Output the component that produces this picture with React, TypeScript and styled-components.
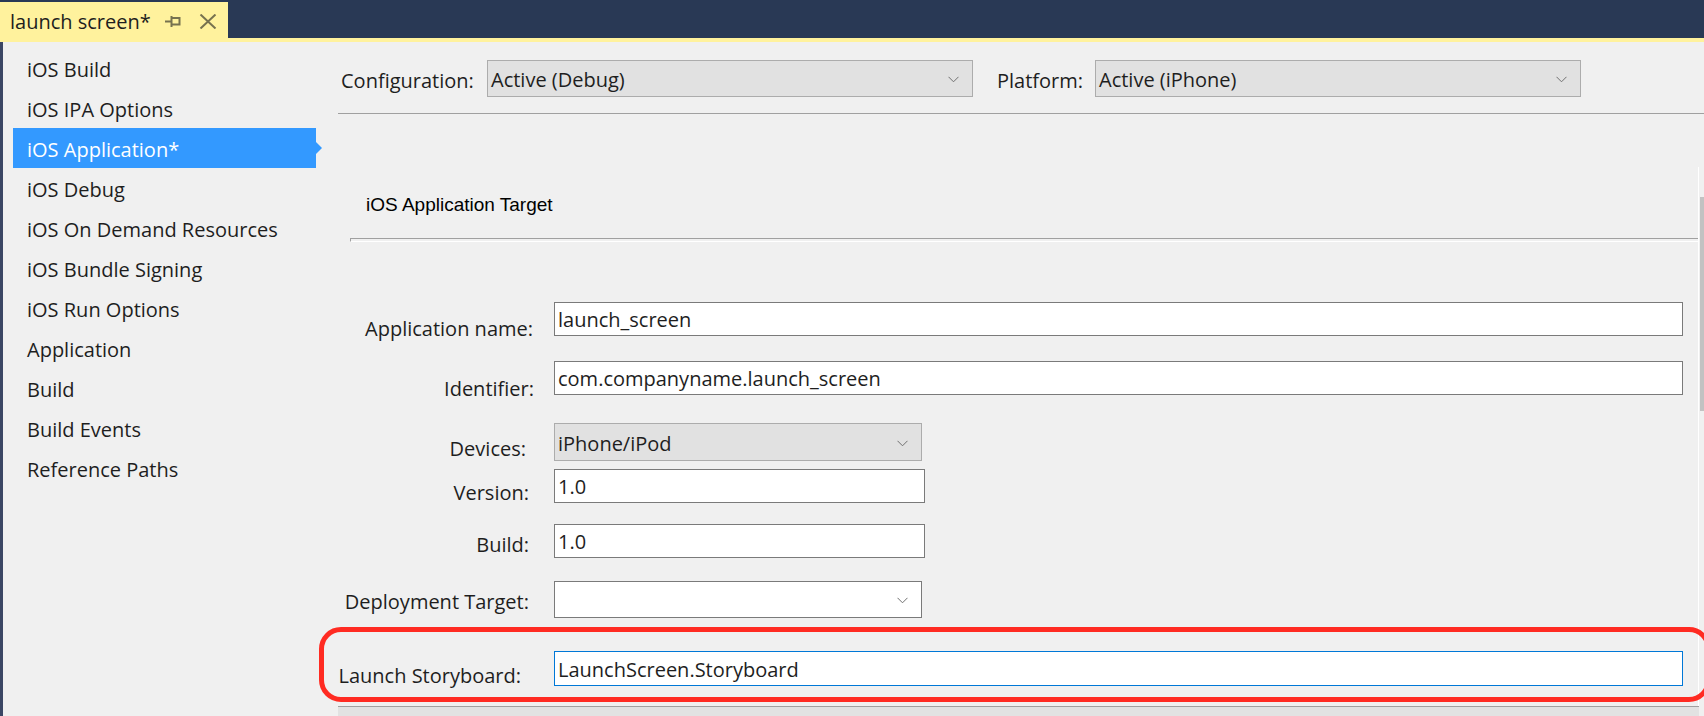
import styled, {createGlobalStyle} from "styled-components";

const GlobalStyle = createGlobalStyle`
    html, body {
        margin: 0;
        padding: 0;
        background: #f0f0f0;
    }
    body {
        font-family: "Open Sans", "Noto Sans", sans-serif;
        color: #1e1e1e;
    }
`

const navItems = [
    "iOS Build",
    "iOS IPA Options",
    "iOS Application*",
    "iOS Debug",
    "iOS On Demand Resources",
    "iOS Bundle Signing",
    "iOS Run Options",
    "Application",
    "Build",
    "Build Events",
    "Reference Paths",
]

const Chevron = () => (
    <svg width="11" height="7" viewBox="0 0 11 7">
        <path d="M0.5 0.8 L5.5 5.8 L10.5 0.8" fill="none" stroke="#6f6f6f" strokeWidth="1"/>
    </svg>
)

const PinIcon = () => (
    <svg width="16" height="13" viewBox="0 0 16 13">
        <path d="M0 6.5 H6.5 M6.5 1 V12 M6.5 3 H14.5 V9.5 H6.5" fill="none" stroke="#77724f" strokeWidth="2"/>
    </svg>
)

const CloseIcon = () => (
    <svg width="18" height="15" viewBox="0 0 18 15">
        <path d="M1.5 0.5 L16.5 14.5 M16.5 0.5 L1.5 14.5" fill="none" stroke="#77724f" strokeWidth="2"/>
    </svg>
)

type SelectProps = { value: string, width: number, height: number, blank?: boolean }

const Select = ({value, width, height, blank}: SelectProps) => (
    <StyledSelect $w={width} $h={height} $blank={blank}>
        <span>{value}</span>
        <Chevron/>
    </StyledSelect>
)

type RowProps = {
    label: string
    top: number
    drop: number
    nudge: number
    height: number
    highlight?: boolean
    children: React.ReactNode
}

const FieldRow = ({label, top, drop, nudge, height, highlight, children}: RowProps) => (
    <Row $top={top} $highlight={highlight}>
        <Label $drop={drop} $nudge={nudge} $h={height}>{label}</Label>
        {children}
    </Row>
)

export default function App() {
    return (
        <Frame>
            <GlobalStyle/>
            <TabWell>
                <Tab>
                    <TabTitle>launch screen*</TabTitle>
                    <TabButton $w={34}><PinIcon/></TabButton>
                    <TabButton $w={24}><CloseIcon/></TabButton>
                </Tab>
            </TabWell>
            <TabAccent/>
            <Body>
                <Sidebar>
                    {navItems.map(item => (
                        <NavItem key={item} $active={item === "iOS Application*"}>{item}</NavItem>
                    ))}
                </Sidebar>
                <Content>
                    <ConfigBar>
                        <ConfigLabel $w={146}>Configuration:</ConfigLabel>
                        <Select value="Active (Debug)" width={486} height={37}/>
                        <ConfigLabel $w={98} $gap={24}>Platform:</ConfigLabel>
                        <Select value="Active (iPhone)" width={486} height={37}/>
                    </ConfigBar>
                    <Panel>
                        <FormArea>
                            <SectionTitle>iOS Application Target</SectionTitle>
                            <GroupRule/>
                            <FieldRow label="Application name:" top={60} drop={8} nudge={3} height={34}>
                                <TextBox $w={1129}>launch_screen</TextBox>
                            </FieldRow>
                            <FieldRow label="Identifier:" top={25} drop={9} nudge={4} height={34}>
                                <TextBox $w={1129}>com.companyname.launch_screen</TextBox>
                            </FieldRow>
                            <FieldRow label="Devices:" top={28} drop={5} nudge={-4} height={38}>
                                <Select value="iPhone/iPod" width={368} height={38}/>
                            </FieldRow>
                            <FieldRow label="Version:" top={8} drop={5} nudge={-1} height={34}>
                                <TextBox $w={371}>1.0</TextBox>
                            </FieldRow>
                            <FieldRow label="Build:" top={21} drop={2} nudge={-1} height={34}>
                                <TextBox $w={371}>1.0</TextBox>
                            </FieldRow>
                            <FieldRow label="Deployment Target:" top={23} drop={0} nudge={-1} height={37}>
                                <Select value="" width={368} height={37} blank/>
                            </FieldRow>
                            <FieldRow label="Launch Storyboard:" top={33} drop={5} nudge={-9} height={35} highlight>
                                <TextBox $w={1129} $h={35} $focused>LaunchScreen.Storyboard</TextBox>
                            </FieldRow>
                        </FormArea>
                        <ScrollTrack>
                            <ScrollThumb/>
                        </ScrollTrack>
                    </Panel>
                    <NextGroup/>
                </Content>
            </Body>
        </Frame>
    )
}

const Frame = styled.div`
    width: 1704px;
    height: 716px;
    overflow: hidden;
    display: flex;
    flex-direction: column;
    background: #f0f0f0;
`

const TabWell = styled.div`
    height: 38px;
    flex-shrink: 0;
    background: #293955;
    display: flex;
    align-items: flex-end;
`

const Tab = styled.div`
    width: 228px;
    height: 36px;
    background: #fff29d;
    display: flex;
    align-items: center;
    box-sizing: border-box;
    padding-left: 10px;
`

const TabTitle = styled.span`
    font-size: 20px;
    color: #1e1e1e;
    width: 155px;
    white-space: nowrap;
    margin-top: 3px;
`

const TabButton = styled.span<{ $w: number }>`
    width: ${p => p.$w}px;
    display: flex;
    align-items: center;
    margin-top: 2px;
`

const TabAccent = styled.div`
    height: 4px;
    flex-shrink: 0;
    background: #fff29d;
`

const Body = styled.div`
    flex: 1;
    display: flex;
    border-left: 3px solid #3b4664;
    min-height: 0;
`

const Sidebar = styled.nav`
    width: 335px;
    flex-shrink: 0;
    padding-top: 6px;
    box-sizing: border-box;
`

const NavItem = styled.div<{ $active?: boolean }>`
    position: relative;
    margin-left: 10px;
    width: 303px;
    height: 40px;
    line-height: 43px;
    padding-left: 14px;
    box-sizing: border-box;
    font-size: 20px;
    white-space: nowrap;
    background: ${p => p.$active ? "#3399ff" : "transparent"};
    color: ${p => p.$active ? "#ffffff" : "#1e1e1e"};

    &::after {
        content: '';
        display: ${p => p.$active ? "block" : "none"};
        position: absolute;
        right: -6px;
        top: 14px;
        border-left: 6px solid #3399ff;
        border-top: 6px solid transparent;
        border-bottom: 6px solid transparent;
    }
`

const Content = styled.main`
    flex: 1;
    display: flex;
    flex-direction: column;
    min-width: 0;
`

const ConfigBar = styled.div`
    height: 53px;
    flex-shrink: 0;
    border-bottom: 1px solid #a0a0a0;
    display: flex;
    align-items: flex-start;
    padding: 18px 0 0 3px;
`

const ConfigLabel = styled.span<{ $w: number, $gap?: number }>`
    width: ${p => p.$w}px;
    margin-left: ${p => p.$gap ?? 0}px;
    font-size: 20px;
    line-height: 37px;
    padding-top: 2px;
    white-space: nowrap;
`

const StyledSelect = styled.div<{ $w: number, $h: number, $blank?: boolean }>`
    width: ${p => p.$w}px;
    height: ${p => p.$h}px;
    box-sizing: border-box;
    border: 1px solid ${p => p.$blank ? "#7a7a7a" : "#acacac"};
    background: ${p => p.$blank ? "#ffffff" : "#e1e1e1"};
    display: flex;
    align-items: center;
    justify-content: space-between;
    padding: 2px 13px 0 3px;
    font-size: 20px;
    white-space: nowrap;
`

const Panel = styled.div`
    flex: 1;
    display: flex;
    min-height: 0;
`

const FormArea = styled.div`
    flex: 1;
    display: flex;
    flex-direction: column;
`

const SectionTitle = styled.div`
    margin: 79px 0 0 28px;
    height: 24px;
    line-height: 24px;
    font-family: "Liberation Sans", Arial, sans-serif;
    font-size: 19px;
    color: #000000;
`

const GroupRule = styled.div`
    margin: 21px 0 0 12px;
    height: 2px;
    border-top: 1px solid #a0a0a0;
    border-bottom: 1px solid #ffffff;
    border-left: 1px solid #a0a0a0;
`

const Row = styled.div<{ $top: number, $highlight?: boolean }>`
    position: relative;
    margin-top: ${p => p.$top}px;
    display: grid;
    grid-template-columns: 192px auto;
    column-gap: 24px;
    align-items: start;
    justify-content: start;

    &::after {
        content: '';
        display: ${p => p.$highlight ? "block" : "none"};
        position: absolute;
        top: -24px;
        bottom: -16px;
        left: -19px;
        right: -13px;
        border: 5px solid #ff2b22;
        border-radius: 22px;
        pointer-events: none;
    }
`

const Label = styled.label<{ $drop: number, $nudge: number, $h: number }>`
    text-align: right;
    white-space: nowrap;
    font-size: 20px;
    height: ${p => p.$h}px;
    line-height: ${p => p.$h + 2 * p.$drop + 4}px;
    margin-right: ${p => -p.$nudge}px;
`

const TextBox = styled.div<{ $w: number, $h?: number, $focused?: boolean }>`
    width: ${p => p.$w}px;
    height: ${p => p.$h ?? 34}px;
    box-sizing: border-box;
    background: #ffffff;
    border: 1px solid ${p => p.$focused ? "#0078d7" : "#7a7a7a"};
    padding-left: 3px;
    font-size: 20px;
    line-height: ${p => p.$h ?? 34}px;
    white-space: nowrap;
`

const ScrollTrack = styled.div`
    width: 6px;
    margin-top: 53px;
    border-left: 1px solid #ffffff;
    box-sizing: border-box;
    padding-top: 30px;
`

const ScrollThumb = styled.div`
    margin-left: 1px;
    height: 214px;
    background: #c2c2c2;
`

const NextGroup = styled.div`
    height: 9px;
    flex-shrink: 0;
    margin-right: 5px;
    border-top: 1px solid #a0a0a0;
    background: #e2e2e2;
`
